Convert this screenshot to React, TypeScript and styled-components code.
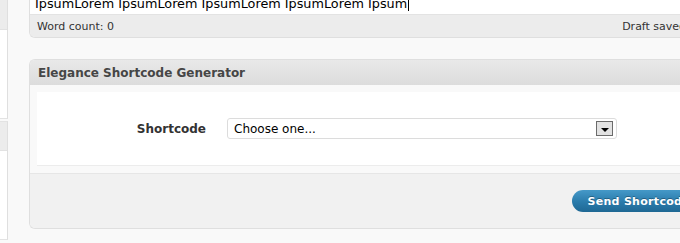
import React from 'react';
import styled, { createGlobalStyle } from 'styled-components';

const GlobalStyle = createGlobalStyle`
  html, body {
    margin: 0;
    padding: 0;
    background: #f9f9f9;
  }
  body {
    font-family: "DejaVu Sans", Verdana, sans-serif;
    color: #333;
    overflow: hidden;
  }
`;

const Page = styled.div`
  display: grid;
  grid-template-columns: 8px 760px;
  column-gap: 21px;
  width: 680px;
  height: 243px;
  overflow: hidden;
  background: #f9f9f9;
`;

const SideColumn = styled.div`
  display: flex;
  flex-direction: column;
  gap: 2px;
`;

const SideBox = styled.div<{ $head: number; $body: number }>`
  display: flex;
  flex-direction: column;
  border-right: 1px solid #dfdfdf;
  border-bottom: 1px solid #e3e3e3;
  border-top: ${p => (p.$head < 29 ? '1px solid #e3e3e3' : 'none')};

  &::before {
    content: '';
    height: ${p => p.$head}px;
    background: #ececec;
    border-bottom: 1px solid #e2e2e2;
  }
  &::after {
    content: '';
    height: ${p => p.$body}px;
    background: #fff;
  }
`;

const MainColumn = styled.div`
  display: flex;
  flex-direction: column;
`;

const Editor = styled.div`
  border-left: 1px solid #dfdfdf;
  border-bottom: 1px solid #dfdfdf;
  border-bottom-left-radius: 6px;
  overflow: hidden;
`;

/* the editor is scrolled: only the last line's lower half shows */
const EditorText = styled.div`
  height: 14px;
  background: #fff;
  display: flex;
  align-items: flex-end;
  overflow: hidden;
  padding-left: 5px;
  font-size: 12.8px;
  line-height: 15px;
  color: #000;
  white-space: nowrap;

  span {
    margin-bottom: 3px;
  }
`;

const Caret = styled.i`
  display: inline-block;
  width: 1px;
  height: 15px;
  background: #000;
  vertical-align: top;
  margin-left: 1px;
`;

const StatusBar = styled.div`
  height: 22px;
  background: #ececec;
  border-top: 1px solid #e3e3e3;
  display: flex;
  align-items: center;
  justify-content: space-between;
  padding: 0 11px 0 7px;
  font-size: 11px;
  color: #333;
`;

const Postbox = styled.div`
  margin-top: 21px;
  border: 1px solid #dfdfdf;
  border-right: none;
  border-top-left-radius: 6px;
  border-bottom-left-radius: 6px;
  overflow: hidden;
  background: #f9f9f9;
`;

const PostboxTitle = styled.h3`
  margin: 0;
  height: 25px;
  display: flex;
  align-items: center;
  padding-left: 8px;
  font-size: 12px;
  font-weight: bold;
  color: #464646;
  background: linear-gradient(to bottom, #e9e9e9, #dcdcdc);
`;

const Inside = styled.div`
  padding: 7px 0 7px 7px;
`;

const FormTable = styled.div`
  height: 74px;
  background: #fff;
  border-bottom: 1px solid #ececec;
  box-sizing: border-box;
  display: grid;
  grid-template-columns: 169px 390px;
  column-gap: 21px;
  align-items: center;
`;

const Label = styled.label`
  justify-self: end;
  font-size: 12px;
  font-weight: bold;
  color: #333;
`;

const Select = styled.div`
  height: 21px;
  box-sizing: border-box;
  border: 1px solid #dcdcdc;
  border-radius: 3px;
  background: #fff;
  display: flex;
  align-items: center;
  justify-content: space-between;
  padding: 0 3px 0 6px;
  font-size: 12px;
  color: #000;
`;

const ArrowButton = styled.span`
  width: 17px;
  height: 15px;
  box-sizing: border-box;
  border: 1px solid #6b6b6b;
  background: #e2e2e2;
  display: flex;
  align-items: center;
  justify-content: center;
  padding-top: 2px;

  &::after {
    content: '';
    border-left: 4px solid transparent;
    border-right: 4px solid transparent;
    border-top: 4px solid #000;
  }
`;

const Footer = styled.div`
  height: 54px;
  background: #f1f1f1;
  border-top: 1px solid #e6e6e6;
  display: flex;
  align-items: center;
  justify-content: flex-end;
  padding-right: 84px;
`;

const SendButton = styled.button`
  height: 22px;
  padding: 0 15px;
  border: none;
  border-radius: 11px;
  background: linear-gradient(to bottom, #4599c8, #2a7bab 55%, #1f6894);
  color: #fff;
  font-family: "DejaVu Sans", Verdana, sans-serif;
  font-size: 11px;
  font-weight: bold;
  letter-spacing: 0.3px;
  text-shadow: 0 -1px 0 rgba(0, 0, 0, 0.3);
  cursor: pointer;
`;

export default function App() {
  return (
    <>
      <GlobalStyle />
      <Page>
        <SideColumn>
          <SideBox $head={29} $body={88} />
          <SideBox $head={28} $body={88} />
        </SideColumn>
        <MainColumn>
          <Editor>
            <EditorText>
              <span>
                IpsumLorem IpsumLorem IpsumLorem IpsumLorem Ipsum
                <Caret />
              </span>
            </EditorText>
            <StatusBar>
              <span>Word count: 0</span>
              <span>Draft saved at 10:42:16 am.</span>
            </StatusBar>
          </Editor>
          <Postbox>
            <PostboxTitle>Elegance Shortcode Generator</PostboxTitle>
            <Inside>
              <FormTable>
                <Label>Shortcode</Label>
                <Select>
                  <span>Choose one...</span>
                  <ArrowButton />
                </Select>
              </FormTable>
            </Inside>
            <Footer>
              <SendButton>Send Shortcode</SendButton>
            </Footer>
          </Postbox>
        </MainColumn>
      </Page>
    </>
  );
}
